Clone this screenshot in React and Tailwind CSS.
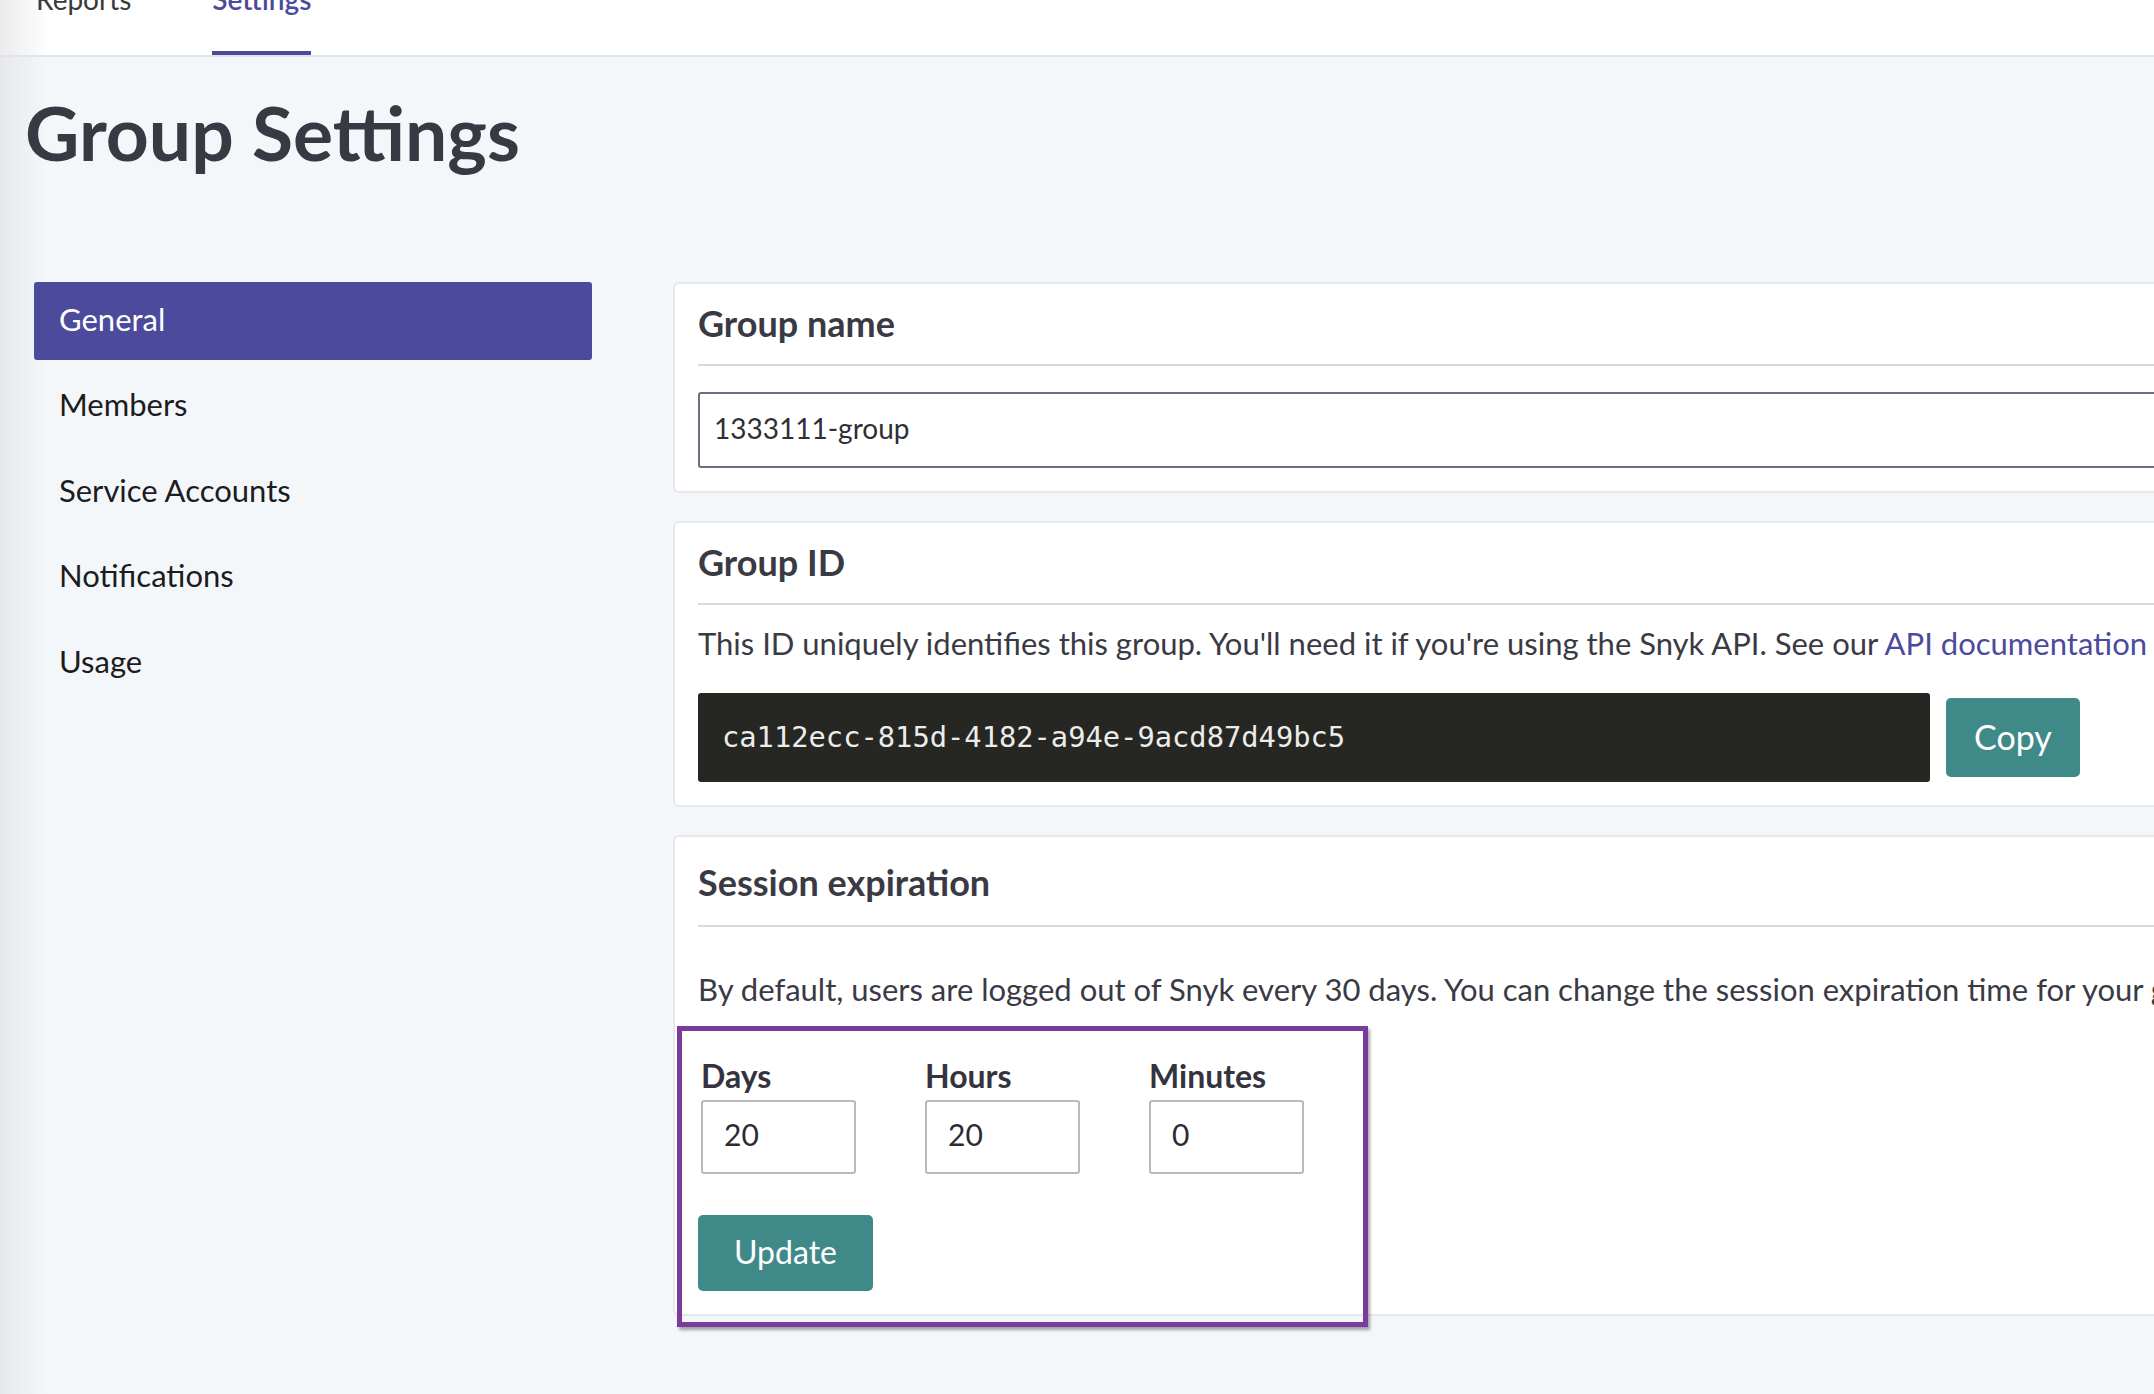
import React from 'react';

const navItems = ['Members', 'Service Accounts', 'Notifications', 'Usage'];

const Card = ({ title, className = '', headPad = 'pt-[21px] pb-[23px]', children }) => (
  <div className={`relative w-[1700px] rounded-[6px] border-2 border-[#e4e7eb] bg-white px-[23px] ${className}`}>
    <h2 className={`border-b-2 border-[#d9dade] text-[36px] font-bold leading-none text-[#3a3a45] ${headPad}`}>
      {title}
    </h2>
    {children}
  </div>
);

const TimeField = ({ label, value }) => (
  <div className="flex w-[155px] flex-col">
    <label className="text-[32px] font-bold leading-none text-[#34343e]">{label}</label>
    <input
      readOnly
      value={value}
      className="mt-[8px] h-[74px] w-[155px] rounded-[3px] border-2 border-[#b9b9c2] bg-white pl-[21px] pb-[6px] text-[30px] text-[#2c2c34] outline-none"
    />
  </div>
);

export default function App() {
  return (
    <div className="relative h-[1394px] w-[2154px] overflow-hidden bg-[#f4f7fa] font-['Lato',sans-serif]">
      {/* top tabs */}
      <nav className="flex h-[57px] items-start gap-[81px] border-b-2 border-[#e1e5ea] bg-[linear-gradient(to_right,#ebebec_0px,#ffffff_50px)] pl-[36px]">
        <div className="flex h-full items-start">
          <span className="-mt-[15px] text-[28px] leading-none text-[#3a3a3a]">Reports</span>
        </div>
        <div className="flex h-full items-start border-b-4 border-[#4b4a9c]">
          <span className="-mt-[15px] text-[28px] font-semibold leading-none text-[#4b4a9c]">Settings</span>
        </div>
      </nav>

      <main className="h-[1337px] bg-[linear-gradient(to_right,#e6e8eb_0px,#f4f7fa_46px)]">
        <h1 className="pl-[25px] pt-[38px] text-[75px] font-bold leading-none text-[#393943]">Group Settings</h1>

        <div className="mt-[112px] flex items-start">
          <aside className="ml-[34px] flex w-[558px] shrink-0 flex-col gap-[7.5px]">
            <div className="flex h-[78px] items-center rounded-[3px] bg-[#4b4a9c] pb-[4px] pl-[25px] text-[31px] text-white">
              General
            </div>
            {navItems.map((item) => (
              <div key={item} className="flex h-[78px] items-center pb-[4px] pl-[25px] text-[31px] text-[#1c1c1f]">
                {item}
              </div>
            ))}
          </aside>

          <section className="ml-[81px] flex shrink-0 flex-col gap-[28px]">
            <Card title="Group name" className="pb-[23px]">
              <input
                readOnly
                value="1333111-group"
                className="mt-[26px] h-[76px] w-full rounded-[3px] border-2 border-[#6f6e7e] bg-white pb-[5px] pl-[14px] text-[28px] text-[#2f2f37] outline-none"
              />
            </Card>

            <Card title="Group ID" className="pb-[23px]">
              <p className="mt-[20px] whitespace-nowrap text-[31px] leading-[1.2] text-[#3a3a45]">
                This ID uniquely identifies this group. You'll need it if you're using the Snyk API. See our{' '}
                <a className="text-[#4b4a9c]">API documentation</a> for more details.
              </p>
              <div className="mt-[31px] flex items-center gap-[16px]">
                <div className="flex h-[89px] w-[1232px] items-center rounded-[3px] bg-[#262722] pl-[24px] font-['DejaVu_Sans_Mono',monospace] text-[28.75px] text-[#ececec]">
                  ca112ecc-815d-4182-a94e-9acd87d49bc5
                </div>
                <button className="h-[79px] w-[134px] rounded-[5px] bg-[#3f8a88] pb-[2px] text-[34px] text-white">
                  Copy
                </button>
              </div>
            </Card>

            <Card title="Session expiration" className="pb-[23px]" headPad="pt-[27px] pb-[25px]">
              <p className="mt-[44px] whitespace-nowrap text-[31px] leading-[1.2] text-[#3a3a45]">
                By default, users are logged out of Snyk every 30 days. You can change the session expiration time for your group here.
              </p>
              <div className="mt-[52px] flex gap-[69px] pl-[3px]">
                <TimeField label="Days" value="20" />
                <TimeField label="Hours" value="20" />
                <TimeField label="Minutes" value="0" />
              </div>
              <button className="mt-[41px] h-[76px] w-[175px] rounded-[5px] bg-[#3f8a88] pb-[3px] text-[32px] text-white">
                Update
              </button>
              {/* highlight annotation */}
              <div className="pointer-events-none absolute left-[2px] top-[189px] h-[301px] w-[691px] border-[5px] border-[#7a3b9b] shadow-[2px_3px_3px_rgba(0,0,0,0.35)]" />
            </Card>
          </section>
        </div>
      </main>
    </div>
  );
}
